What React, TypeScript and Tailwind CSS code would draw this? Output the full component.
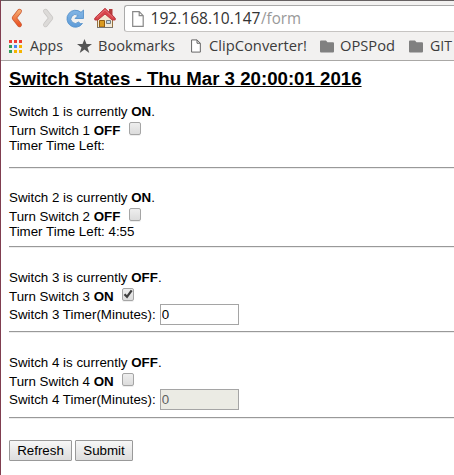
import type { ReactNode } from "react";

function Label({ width, children }: { width: number; children: string }) {
  return (
    <svg width={width} height="20" className="shrink-0 overflow-visible fill-[#3c3c3c] font-['Open_Sans',sans-serif] text-[14.5px]">
      <text x="0" y="15" textLength={width} lengthAdjust="spacingAndGlyphs">{children}</text>
    </svg>
  );
}

function PageIcon({ large = false }: { large?: boolean }) {
  return (
    <svg width={large ? 12 : 10} height={large ? 16 : 14} viewBox="0 0 12 16" className="shrink-0" fill="#fff" stroke={large ? "#888" : "#666"} strokeWidth="1.2">
      <path d="M.7.7h6.5l4 4v10.6H.7zM7.2.7v4h4" />
    </svg>
  );
}

function Folder() {
  return (
    <svg width="14" height="13" viewBox="0 0 14 13" className="shrink-0" fill="#808080">
      <path d="M0 1.5Q0 .5 1 .5h5l1.5 1.7H13q1 0 1 1v8.3q0 1-1 1H1q-1 0-1-1z" />
    </svg>
  );
}

const dots = ["#ee3e33", "#ee3e33", "#ee3e33", "#329f5b", "#4285f4", "#f5b400", "#329f5b", "#f5b400", "#f5b400"];

function Toolbar() {
  return (
    <header className="h-[61px] border-t border-b border-t-[#666162] border-b-[#aaa8a6] bg-[#f2f1f0]">
      <div className="flex h-[31px] pt-1">
        <svg width="123" height="27" viewBox="1 5 123 27" className="shrink-0">
          <defs>
            <linearGradient id="orange" x1="0" y1="0" x2="0" y2="1">
              <stop stopColor="#f5a56a" /><stop offset="1" stopColor="#ea5525" />
            </linearGradient>
            <linearGradient id="blue" x1="0" y1="0" x2="0" y2="1">
              <stop stopColor="#83b5e5" /><stop offset="1" stopColor="#5d9bd8" />
            </linearGradient>
          </defs>
          <path d="M19.500 11.200 14.200 18l5.300 6.800" fill="none" stroke="#c95b36" strokeWidth="4.800" strokeLinecap="round" strokeLinejoin="round" />
          <path d="M19.500 11.200 14.200 18l5.300 6.800" fill="none" stroke="url(#orange)" strokeWidth="3.400" strokeLinecap="round" strokeLinejoin="round" />
          <path d="m45.500 11.200 5.300 6.800-5.300 6.800" fill="none" stroke="#c8c6c4" strokeWidth="4.800" strokeLinecap="round" strokeLinejoin="round" />
          <path d="m45.500 11.200 5.300 6.800-5.300 6.800" fill="none" stroke="#dcdad8" strokeWidth="3.400" strokeLinecap="round" strokeLinejoin="round" />
          <path d="M83.500 10v8.500H75l3-3a4.400 4.400 0 1 0 .5 6.500q2 2.500 4 1.500a8.500 8.500 0 1 1-1.500-11.200z" fill="url(#blue)" stroke="#4d8cc8" strokeWidth=".8" strokeLinejoin="round" />
          <path d="M97.500 17 105 11l7.500 6v10.500h-15z" fill="#f3e9d5" stroke="#94713f" />
          <path d="M109 14V9h3.500v8z" fill="#b33b3b" />
          <path d="M105 8.300 94.800 18v2h3L105 14l7.200 6h3v-2z" fill="#d9464c" stroke="#b53039" strokeWidth=".9" strokeLinejoin="round" />
          <path d="m97 17.300 8-7.500 8 7.500" fill="none" stroke="#e47679" strokeWidth="1" />
          <path d="M99.500 20.500h5V27h-5z" fill="#d99a20" stroke="#8f5b13" />
          <path d="M106.500 20.500h4v3h-4z" fill="#c7dbe9" stroke="#757d80" />
          <path d="M97 27.500h16" stroke="#777" />
        </svg>
        <div className="flex h-[27px] flex-1 items-center rounded-l-[3px] border border-r-0 border-[#aaa] border-b-[#c6c4c2] bg-white pl-[7px]">
          <PageIcon large />
          <svg width="151" height="22" className="ml-[6px] shrink-0 overflow-visible font-['Open_Sans',sans-serif] text-[16px]">
            <text x=".5" y="16" textLength="110" lengthAdjust="spacingAndGlyphs" fill="#333">192.168.10.147</text>
            <text x="111" y="16" textLength="40" lengthAdjust="spacingAndGlyphs" fill="#999">/form</text>
          </svg>
        </div>
      </div>
      <div className="flex h-[28px] items-center pl-2">
        <div className="grid w-[13px] shrink-0 grid-cols-3 gap-[2px]">
          {dots.map((color, i) => <i key={i} className="size-[3px]" style={{ backgroundColor: color }} />)}
        </div>
        <div className="ml-2"><Label width={33}>Apps</Label></div>
        <svg width="15" height="14" viewBox="0 0 15 14" className="mr-[6px] ml-[14px] shrink-0" fill="#555">
          <path d="m7.500 0 2 5h5.500l-4.500 3.400 1.800 5.600-4.800-3.400L2.700 14l1.800-5.600L0 5h5.500z" />
        </svg>
        <Label width={77}>Bookmarks</Label>
        <div className="mr-2 ml-4"><PageIcon /></div>
        <Label width={98}>ClipConverter!</Label>
        <div className="mr-[6px] ml-[13px]"><Folder /></div>
        <Label width={55}>OPSPod</Label>
        <div className="mr-[7px] ml-[14px]"><Folder /></div>
        <Label width={22}>GIT</Label>
      </div>
    </header>
  );
}

function Checkbox({ checked = false }: { checked?: boolean }) {
  return (
    <span className="relative ml-[8.500px] block h-[13px] w-[12px] rounded-[2px] border border-[#a5a5a5] bg-linear-to-b from-[#eee] to-[#dcdcdc] shadow-[0_1px_0_#eee]">
      {checked && (
        <svg width="12" height="12" viewBox="0 0 12 12" className="absolute -top-px -left-px" fill="none" stroke="#404040" strokeWidth="2.300">
          <path d="m2.500 6.300 2.500 2.500 4.700-6.500" />
        </svg>
      )}
    </span>
  );
}

function Switch({ id, on, checked, className, children }: { id: number; on: boolean; checked?: boolean; className: string; children: ReactNode }) {
  return (
    <section className={`border-b border-[#999] shadow-[0_1px_0_#ededed] ${className}`}>
      <p className="h-[18px]">Switch {id} is currently <b>{on ? "ON" : "OFF"}</b>.</p>
      <div className="flex h-4 items-start">
        <p className="pt-px">Turn Switch {id} <b>{on ? "OFF" : "ON"}</b></p>
        <Checkbox checked={checked} />
      </div>
      {children}
    </section>
  );
}

function Timer({ id, disabled = false }: { id: number; disabled?: boolean }) {
  return (
    <label className="flex h-[21px] items-center gap-1 whitespace-nowrap">
      <span>Switch {id} Timer(Minutes):</span>
      <input
        defaultValue="0"
        disabled={disabled}
        className="h-[21px] w-[79px] rounded-none border border-[#a5a5a5] bg-white px-px text-black disabled:bg-[#ebebe4] disabled:text-[#606060]"
      />
    </label>
  );
}

function Button({ width, children }: { width: string; children: string }) {
  return (
    <button className={`h-[21px] rounded-[1px] border border-[#999] bg-linear-to-b from-[#f7f7f7] to-[#ddd] leading-[19px] ${width}`}>
      {children}
    </button>
  );
}

export default function App() {
  return (
    <div className="h-[475px] w-[454px] overflow-hidden border-l border-[#803e50] bg-white">
      <Toolbar />
      <main className="pl-2 font-['Liberation_Sans',Arial,sans-serif] text-[13.333px] leading-[15px] text-black">
        <h1 className="h-[43px] pt-[7px] text-[18.667px] leading-[22px] font-bold whitespace-nowrap underline decoration-[1px]">Switch States - Thu Mar 3 20:00:01 2016</h1>
        <Switch id={1} on className="h-[64px]"><p>Timer Time Left:</p></Switch>
        <Switch id={2} on className="mt-[22px] h-[57px]"><p>Timer Time Left: 4:55</p></Switch>
        <Switch id={3} on={false} checked className="mt-[23px] h-[62px]"><Timer id={3} /></Switch>
        <Switch id={4} on={false} className="mt-[23px] h-[63px]"><Timer id={4} disabled /></Switch>
        <div className="mt-[22px] flex gap-[3px]">
          <Button width="w-[63px]">Refresh</Button>
          <Button width="w-[58px]">Submit</Button>
        </div>
      </main>
    </div>
  );
}
